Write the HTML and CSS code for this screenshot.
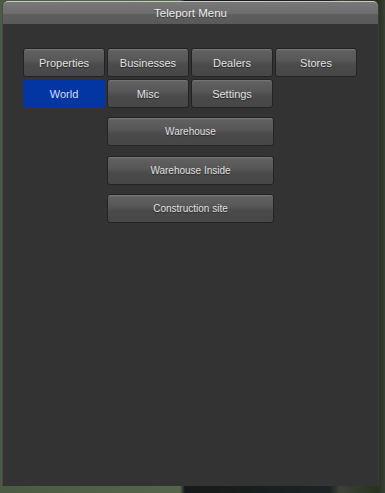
FILE: index.html
```html
<!DOCTYPE html>
<html lang="en">
<head>
    <meta charset="UTF-8">
    <meta name="viewport" content="width=device-width, initial-scale=1.0">
    <title>Teleport Menu</title>
    <link rel="stylesheet" href="styles.css">
</head>
<body>
    <div class="window">
        <div class="title-bar">Teleport Menu</div>

        <div class="content">
            <div class="tabs">
                <button class="tab">Properties</button>
                <button class="tab">Businesses</button>
                <button class="tab">Dealers</button>
                <button class="tab">Stores</button>
                <button class="tab active">World</button>
                <button class="tab">Misc</button>
                <button class="tab">Settings</button>
            </div>

            <div class="locations">
                <button class="tab">Warehouse</button>
                <button class="tab">Warehouse Inside</button>
                <button class="tab">Construction site</button>
            </div>
        </div>
    </div>
</body>
</html>
```

FILE: styles.css
```css
html, body {
    height: 100%;
}

body {
    margin: 0;
    padding: 1px 6px 7px 2px;
    box-sizing: border-box;
    background: linear-gradient(to right, #4c5a44 0, #56644c 180px, #15191a 185px, #1d2224 330px, #3c4236 340px, #27311f 378px, #3a4034 100%);
    font-family: "Liberation Sans", Arial, sans-serif;
}

.window {
    height: 100%;
    background: #333333;
    border-radius: 5px 5px 0 0;
    border-left: 1px solid #4a4a4a;
    border-right: 1px solid #3a3a3a;
    box-sizing: border-box;
    overflow: hidden;
}

.title-bar {
    height: 22px;
    line-height: 22px;
    text-align: center;
    font-size: 11.5px;
    color: #eeeeee;
    text-shadow: 0 1px 1px rgba(0, 0, 0, 0.4);
    border-top: 1px solid #c8c8c8;
    border-radius: 5px 5px 0 0;
    background: linear-gradient(#787878 0, #6c6c6c 55%, #5e5e5e 56%, #5a5a5a 100%);
}

.content {
    padding: 24px 0 0 20px;
}

.tabs {
    display: grid;
    grid-template-columns: repeat(4, 82px);
    grid-auto-rows: 29px;
    gap: 2px;
}

.tab {
    height: 29px;
    padding: 0;
    border: 1px solid #232323;
    border-radius: 3px;
    background: linear-gradient(#7a7a7a 0, #606060 2px, #585858 40%, #4a4a4a 60%, #474747 100%);
    color: #e2e2e2;
    font-family: "Liberation Sans", Arial, sans-serif;
    font-size: 11px;
    text-shadow: 0 1px 1px rgba(0, 0, 0, 0.5);
    cursor: pointer;
}

.tab.active {
    background: #0335a3;
    border-color: #0335a3;
    border-radius: 0;
    color: #d6defa;
    text-shadow: none;
}

.locations {
    display: flex;
    flex-direction: column;
    gap: 9.5px;
    width: 167px;
    margin: 9px 0 0 84px;
}

.locations .tab {
    font-size: 10px;
}
```
